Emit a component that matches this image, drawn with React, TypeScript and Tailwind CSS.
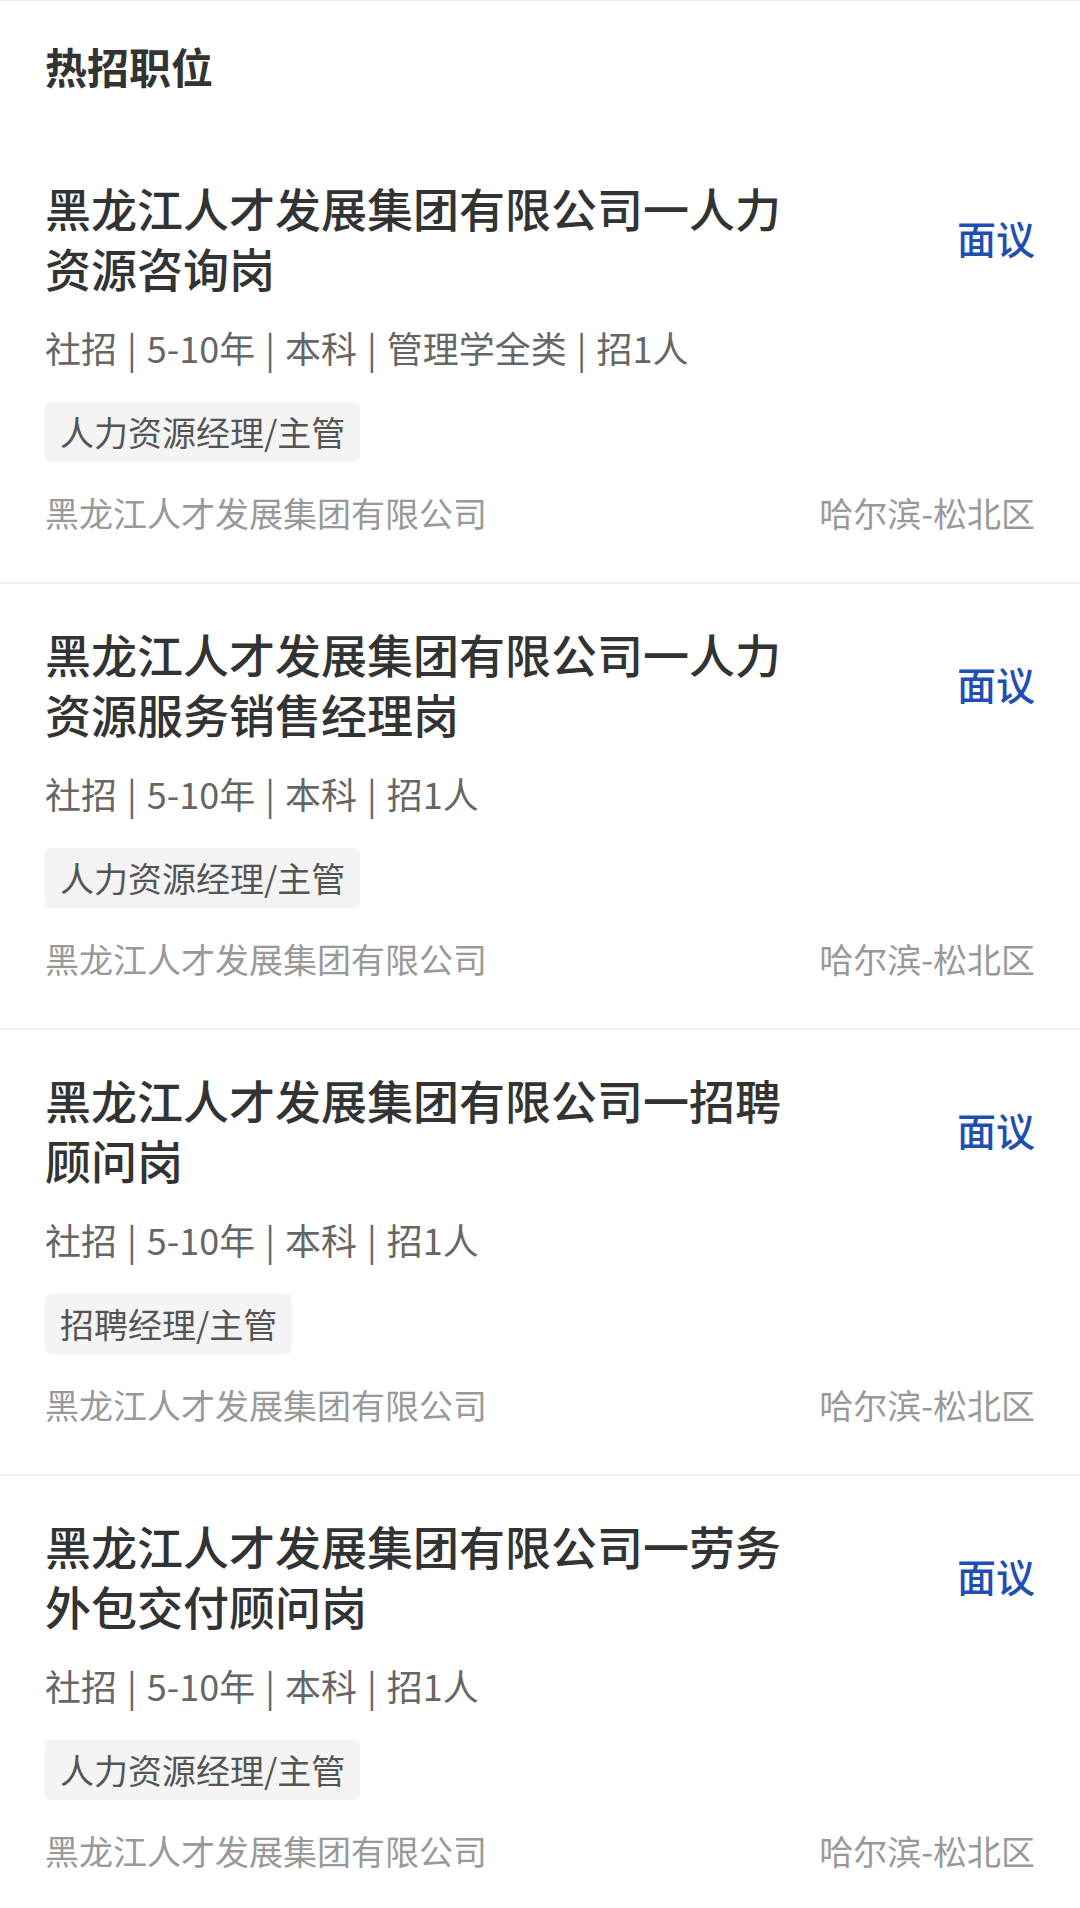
import React from 'react'

interface Job {
  id: number
  title: string
  meta: string[]
  tag: string
  company: string
  location: string
  salary: string
}

const jobs: Job[] = [
  {
    id: 1,
    title: '黑龙江人才发展集团有限公司一人力资源咨询岗',
    meta: ['社招', '5-10年', '本科', '管理学全类', '招1人'],
    tag: '人力资源经理/主管',
    company: '黑龙江人才发展集团有限公司',
    location: '哈尔滨-松北区',
    salary: '面议',
  },
  {
    id: 2,
    title: '黑龙江人才发展集团有限公司一人力资源服务销售经理岗',
    meta: ['社招', '5-10年', '本科', '招1人'],
    tag: '人力资源经理/主管',
    company: '黑龙江人才发展集团有限公司',
    location: '哈尔滨-松北区',
    salary: '面议',
  },
  {
    id: 3,
    title: '黑龙江人才发展集团有限公司一招聘顾问岗',
    meta: ['社招', '5-10年', '本科', '招1人'],
    tag: '招聘经理/主管',
    company: '黑龙江人才发展集团有限公司',
    location: '哈尔滨-松北区',
    salary: '面议',
  },
  {
    id: 4,
    title: '黑龙江人才发展集团有限公司一劳务外包交付顾问岗',
    meta: ['社招', '5-10年', '本科', '招1人'],
    tag: '人力资源经理/主管',
    company: '黑龙江人才发展集团有限公司',
    location: '哈尔滨-松北区',
    salary: '面议',
  },
]

function JobCard({ job, last }: { job: Job; last: boolean }) {
  return (
    <div className={`px-[45px] pt-[39px] pb-[45px] ${last ? '' : 'border-b-2 border-[#eeeeee]'}`}>
      {/* Title + salary */}
      <div className="flex items-center justify-between">
        <h2 className="w-[760px] text-[46px] leading-[60px] font-medium text-[#333333]">{job.title}</h2>
        <span className="shrink-0 text-[39px] leading-[60px] font-medium text-[#1f4fb3]">{job.salary}</span>
      </div>

      {/* Meta */}
      <p className="mt-[26px] text-[36px] leading-[48px] text-[#666666]">
        {job.meta.map((m, i) => (
          <span key={i}>
            {i > 0 && <span className="mx-[10px]">|</span>}
            {m}
          </span>
        ))}
      </p>

      {/* Tag */}
      <div className="mt-[31px] flex">
        <span className="h-[60px] rounded-[6px] bg-[#f4f4f4] px-[15px] text-[34px] leading-[60px] text-[#555555]">
          {job.tag}
        </span>
      </div>

      {/* Company / location */}
      <div className="mt-[27px] flex items-center justify-between text-[34px] leading-[48px] text-[#999999]">
        <span>{job.company}</span>
        <span>{job.location}</span>
      </div>
    </div>
  )
}

export default function App() {
  return (
    <div
      className="min-h-screen w-[1080px] bg-white border-t border-[#eeeeee]"
      style={{ fontFamily: '"Noto Sans CJK SC", "Noto Sans", sans-serif' }}
    >
      <div className="px-[45px] pt-[35px] pb-[42px]">
        <h1 className="text-[42px] leading-[60px] font-bold text-[#333333]">热招职位</h1>
      </div>
      {jobs.map((job, i) => (
        <JobCard key={job.id} job={job} last={i === jobs.length - 1} />
      ))}
    </div>
  )
}
